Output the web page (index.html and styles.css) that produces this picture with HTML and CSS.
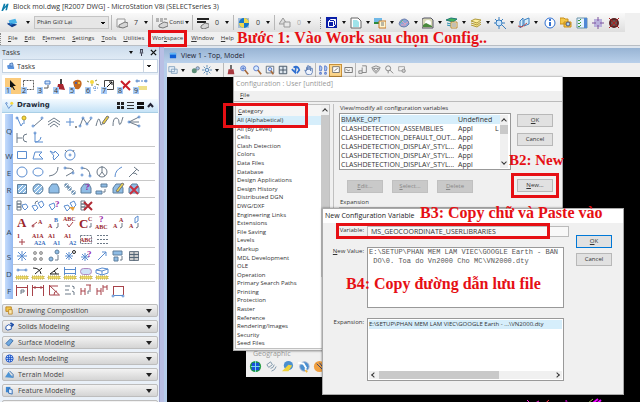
FILE: index.html
```html
<!DOCTYPE html>
<html lang="vi">
  <head>
    <meta charset="UTF-8" />
    <title>Block moi.dwg - MicroStation V8i</title>
    <link rel="stylesheet" href="styles.css">
  </head>
  <body>
    <header class="titlebar">
      <svg class="logo" viewBox="0 0 9 10"><path d="M0 10L3 1h2l-1 4 3-4h2L7 9H5l1-4-3 3-1 2z" fill="#0b7cab"/></svg>
      <h1>Block moi.dwg [R2007 DWG] - MicroStation V8i (SELECTseries 3)</h1>
    </header>

    <div class="toolbar">
      <button class="tool wide" title="Template"><svg viewBox="0 0 14 12"><path d="M1 7l5-2 7 3-6 3z" fill="#123d8a"/><path d="M3 3l8-2 2 5-8 2z" fill="#49b3e8"/><path d="M1 5l3 2 4-1-2 3z" fill="#1a6cc5"/></svg><i class="dd"></i></button>
      <select class="level" title="Level"><option>Phân Giữ Lại</option></select>
      <span class="sep"></span>
      <button class="tool attr" title="Color"><svg viewBox="0 0 12 12"><path d="M1 2h8v8H1z" fill="#f4f4f4" stroke="#999"/><path d="M3 8l6-3 3 1v3l-5 2-4-1z" fill="#d5d5d5" stroke="#777"/></svg><span>7</span><i class="dd"></i></button>
      <span class="sep"></span>
      <button class="tool style" title="Line style"><svg viewBox="0 0 12 12"><path d="M0 2h12M0 4h8" stroke="#777" stroke-dasharray="3 1"/><path d="M3 8l5-3 4 1v3l-5 2-4-1z" fill="#d5d5d5" stroke="#777"/></svg><span>Conti</span><i class="dd"></i></button>
      <span class="sep"></span>
      <button class="tool attr" title="Weight"><svg viewBox="0 0 12 12"><path d="M0 2h12M0 5h9" stroke="#222" stroke-width="2"/><path d="M4 9l4-3 4 1v3l-5 2-3-1z" fill="#d5d5d5" stroke="#777"/></svg><span>0</span><i class="dd"></i></button>
      <span class="sep"></span>
      <button class="tool attr" title="Transparency"><svg viewBox="0 0 12 12"><path d="M0 1h11v10H0z" fill="#a8bfd8"/><circle cx="6" cy="6" r="5" fill="#1677c9"/><path d="M6 1a5 5 0 0 1 5 5H6zM6 6v5a5 5 0 0 1-5-5z" fill="#f0d84e"/></svg><span>0</span><i class="dd"></i></button>
      <span class="sep"></span>
      <button class="tool attr faded" title="Priority"><svg viewBox="0 0 12 12"><path d="M4 1l4 6H0z" fill="#ddd" stroke="#999"/><path d="M5 5h6v5H5z" fill="#e8e8e8" stroke="#999"/></svg><span>0</span><i class="dd"></i></button>
      <span class="grip"></span>
      <button class="tool" title="Models"><svg viewBox="0 0 12 12"><path d="M0 0h11v11H0z" fill="#0a1fa8"/><path d="M2.500 4.500h5v5h-5zM2.500 4.500l2-2h5v5l-2 2M7.500 4.500l2-2" stroke="#fff"/></svg><i class="dd"></i></button>
      <button class="tool" title="References"><svg viewBox="0 0 12 12"><path d="M1 1h7l3 3v7H1z" fill="#fff" stroke="#666"/><path d="M3 3h4l2 2v5H3z" fill="#9fe3ea"/></svg><i class="dd"></i></button>
      <button class="tool" title="Raster"><svg viewBox="0 0 12 12"><path d="M0 1h8v6H0z" fill="#6fb8e6"/><path d="M0 5h8v2H0z" fill="#2e8a3a"/><path d="M5 4h7v7H5z" fill="#fff6d0" stroke="#c57a2c"/><path d="M7 6h3M7 8h3" stroke="#777"/></svg><i class="dd"></i></button>
      <button class="tool" title="Point clouds"><svg viewBox="0 0 12 12"><path d="M1 7q1-5 6-5 4 1 4 5-2 3-5 3-4 0-5-3z" fill="#89a6d8" stroke="#6d7fae"/><path d="M4 4l3 3 3-2M3 8h5" stroke="#e8a0b8"/><path d="M2 6l3-3" stroke="#58b88a"/></svg><i class="dd"></i></button>
      <button class="tool" title="Level manager"><svg viewBox="0 0 12 12"><path d="M0 2l2-1h7l2 2v8H0z" fill="#d9d9b8" stroke="#556"/><circle cx="6" cy="6" r="3" fill="#fff"/><path d="M1 8l3-2 6 3v1H1z" fill="#4a8a3e"/></svg><i class="dd"></i></button>
      <button class="tool" title="Level display"><svg viewBox="0 0 12 12"><path d="M0 3l5-2 6 1-4 3z" fill="#3fb45a" stroke="#277"/><path d="M1 6l4 1 3-2M1 8l4 1" stroke="#2a8fb0"/><path d="M5 5h6v6H5z" fill="#fff7dd" stroke="#b98a3a"/><path d="M6 7h4M6 9h4" stroke="#888"/></svg><i class="dd"></i></button>
      <button class="tool" title="Level filters"><svg viewBox="0 0 12 12"><path d="M1 8l6 2 4-3M1 6l6 2 4-3" fill="#f8e58a" stroke="#b09a3a"/><path d="M1 4l6 2 4-3-6-1z" fill="#fbee9e" stroke="#b09a3a"/></svg><i class="dd"></i></button>
      <button class="tool" title="AccuDraw"><svg viewBox="0 0 12 12"><circle cx="5" cy="6" r="3" fill="#cfe6fa" stroke="#3a7fc0"/><path d="M5 0v3M5 9v3M0 6h2M8 6h3M1 2l2 2M9 2L7 4M8 8l4 4" stroke="#3a7fc0"/></svg><i class="dd"></i></button>
      <button class="tool" title="Keyin"><svg viewBox="0 0 12 12"><path d="M2 4l3-3v7l-3 3zM6 3l5-2v6L6 9z" fill="#d6edfa" stroke="#3a7fc0"/><path d="M0 9l4 1 5-4" stroke="#c04a4a"/></svg><i class="dd"></i></button>
      <button class="tool plain" title="Element information"><svg viewBox="0 0 12 12"><circle cx="6" cy="6" r="5" fill="#fff" stroke="#2f6fd0"/><path d="M6 5v4M6 2v2" stroke="#2f6fd0" stroke-width="2"/></svg></button>
      <button class="tool plain" title="Project explorer"><svg viewBox="0 0 12 12"><path d="M0 1h4l1 1h3v5H0zM4 5h7v5H4z" fill="#f5c84a" stroke="#c98f1a"/><circle cx="8" cy="7" r="2" fill="#a8d6f5" stroke="#557"/></svg></button>
      <button class="tool plain" title="Tasks"><svg viewBox="0 0 12 12"><path d="M1 1h10v10H1z" fill="#e4f3ff" stroke="#6a93a8"/><path d="M8 1h3v10H8z" fill="#4f87d5"/><path d="M2 3l1 1 2-2M2 6l1 1 2-2M2 9l1 1 2-2" stroke="#3c9c3c"/></svg></button>
      <button class="tool plain" title="Saved views"><svg viewBox="0 0 12 12"><path d="M2 2h8v8H2z" fill="#b9b0dc"/><path d="M6 0v4M6 8v4M0 6h4M8 6h4" stroke="#7a4f9a"/></svg></button>
      <button class="tool plain" title="Help off"><svg viewBox="0 0 12 12"><circle cx="6" cy="6" r="4" fill="#6b5552" stroke="#5a2222" stroke-width="2"/><path d="M1 1l10 10M11 1L1 11" stroke="#b02020"/></svg></button>
    </div>

    <nav class="menubar">
      <span class="grip"></span>
      <a href="#"><u>F</u>ile</a>
      <a href="#"><u>E</u>dit</a>
      <a href="#">E<u>l</u>ement</a>
      <a href="#"><u>S</u>ettings</a>
      <a href="#"><u>T</u>ools</a>
      <a href="#"><u>U</u>tilities</a>
      <a href="#" class="marked">Wor<u>k</u>space</a>
      <a href="#"><u>W</u>indow</a>
      <a href="#"><u>H</u>elp</a>
      <strong class="note step1">Bước 1: Vào Work sau chọn Config..</strong>
    </nav>

    <main class="workspace">
      <aside class="tasks">
        <div class="tasks-title">
          <h2>Tasks</h2>
          <i class="dd"></i>
          <svg viewBox="0 0 8 8"><path d="M3 0v4M5 0v4M2 4.500h4M4 5v3M3 .5h2" stroke="#223"/></svg>
          <svg viewBox="0 0 8 8"><path d="M1 1l6 6M7 1L1 7" stroke="#111" stroke-width="1.500"/></svg>
        </div>
        <div class="task-pick">
          <svg viewBox="0 0 9 9"><path d="M0 4l3-1 5 2v3H1z" fill="#5b93dd"/><path d="M3 2l3-1 1 3-3 1z" fill="#9cc4f2" stroke="#4a78b8"/></svg>
          <select title="Tasks"><option>Tasks</option></select>
        </div>
        <div class="main-tools">
          <button class="on" title="Element selection"><svg viewBox="0 0 16 16"><path d="M5 2l6 6-3 0 2 4-1 0-2-3-2 2z" fill="#111"/></svg><b>1</b></button>
          <button title="Fence"><svg viewBox="0 0 16 16"><path d="M2.500 2.500h10v9h-10z" stroke="#555" stroke-dasharray="2 1"/></svg><b>2</b></button>
          <button title="Manipulate"><svg viewBox="0 0 16 16"><path d="M8 3h5v3H8z" stroke="#4a7fc8" fill="#cfe2fa"/><path d="M11 7v3H7" stroke="#555"/></svg><b>3</b></button>
          <button title="View"><svg viewBox="0 0 16 16"><path d="M7 1h2v5H7z" fill="#444"/><path d="M5 6h5l2 6-8-1z" fill="#a8262f"/></svg><b>4</b></button>
          <button title="Change attributes"><svg viewBox="0 0 16 16"><path d="M4 4q4-4 8-1 2 4-2 8-5 1-5-3z" fill="#c56a20"/><circle cx="7" cy="5" r="1" fill="#2a5cc8"/><circle cx="10" cy="5" r="1" fill="#f5dc4a"/></svg><b>5</b></button>
          <button title="Groups"><svg viewBox="0 0 16 16"><circle cx="7" cy="4" r="2" fill="#f7d93c"/><path d="M7 6v2M2 3l2 1M12 2l-2 1M11 6l3 1" stroke="#8a8a40"/><path d="M8 10h5M10 8v5" stroke="#4a7fc8" stroke-dasharray="1 1"/></svg><b>6</b></button>
          <button title="Scale"><svg viewBox="0 0 16 16"><path d="M3.500 2.500h9v9h-9z" stroke="#444"/><path d="M5 10l6-6M8 4h3v3" stroke="#111"/></svg><b>7</b></button>
          <button title="Delete"><svg viewBox="0 0 16 16"><path d="M4 3l9 9M13 3L4 12" stroke="#c81e2a" stroke-width="2"/></svg><b>8</b></button>
          <button title="Measure"><svg viewBox="0 0 16 16"><path d="M5 3h7" stroke="#4a7fc8" stroke-dasharray="2 1"/><circle cx="4" cy="3" r="1" stroke="#4a7fc8"/><circle cx="13" cy="3" r="1" stroke="#4a7fc8"/><path d="M5 8h9v4H5z" fill="#eee08a"/></svg><b>9</b></button>
        </div>

        <div class="drawing-head">
          <svg viewBox="0 0 12 12"><circle cx="9" cy="3" r="2" fill="#f7d93c"/><path d="M9 5v2M1 3l4 7M5 10l3-4" stroke="#4a7fc8"/><circle cx="2" cy="3" r="1" fill="#fff" stroke="#4a7fc8"/></svg>
          <h3>Drawing</h3>
          <svg viewBox="0 0 9 9"><path d="M1 1h3v3H1zM5 1h3v3H5zM1 5h3v3H1zM5 5h3v3H5z" fill="#222"/></svg>
          <svg viewBox="0 0 9 9"><path d="M1 1.500h7M1 4.500h7M1 7.500h7" stroke="#333"/></svg>
          <svg viewBox="0 0 9 9"><path d="M1 1h7v3H1zM1 5h7v3H1z" fill="#111"/></svg>
          <svg viewBox="0 0 9 9"><path d="M2 6l2.500-3L7 6" stroke="#223" stroke-width="2"/></svg>
        </div>

        <div class="palette">
          <div class="group tall"><b>Q</b><div class="icons">
            <svg viewBox="0 0 16 16"><circle cx="10" cy="4" r="2" fill="#f7d93c" stroke="#b59c28"/><path d="M10 6v4M3 3l4 9M7 12l2-3" class="bl"/><circle cx="3" cy="4" r="1" class="bl"/></svg>
            <svg viewBox="0 0 16 16"><path d="M4 12l8-7" class="dk"/><circle cx="3" cy="12" r="1" class="bl"/><circle cx="12" cy="4" r="1" class="bl"/></svg>
            <svg viewBox="0 0 16 16"><path d="M2 8l6-4 6 4M2 11l6-4 6 4M4 13l4-3 4 3" class="dk"/></svg>
            <svg viewBox="0 0 16 16"><path d="M8 4v8M4 8h8" class="bl"/><path d="M14 12v2" class="bk"/></svg>
            <svg viewBox="0 0 16 16"><path d="M2 12l3-8 4 6 4-5" class="dk"/><circle cx="2" cy="12" r="1" class="bl"/><circle cx="5" cy="4" r="1" class="bl"/><circle cx="9" cy="10" r="1" class="bl"/><circle cx="13" cy="4" r="1" class="bl"/></svg>
            <svg viewBox="0 0 16 16"><path d="M2 12q2-8 3-7t2 6q2 0 6-8" class="dk"/><path d="M8 9l5-7 2 1-5 7z" fill="#f0cf3c" stroke="#777"/></svg>
            <svg viewBox="0 0 16 16"><path d="M3 12q0-8 3-8t3 5q1 5 4-6" class="dk"/></svg>
            <svg viewBox="0 0 16 16"><path d="M3 8l10-5M3 8h10M3 8l10 4" class="dk"/><circle cx="3" cy="8" r="1" class="bl"/><circle cx="13" cy="3" r="1" class="bl"/><circle cx="13" cy="12" r="1" class="bl"/></svg>
            <svg viewBox="0 0 16 16"><path d="M3 3v10M3 8h5M13 4q-4 0-4 4t4 4" class="dk"/></svg>
            <svg viewBox="0 0 16 16"><path d="M5 3v9h8M5 12q5 0 6-5" class="bl"/><circle cx="5" cy="3" r="1" class="bl"/></svg>
          </div></div>
          <div class="group"><b>W</b><div class="icons">
            <svg viewBox="0 0 16 16"><path d="M3.500 4.500h9v7h-9z" class="bl"/></svg>
            <svg viewBox="0 0 16 16"><path d="M3 12l2-7h7L9 8l4 4z" class="bl"/></svg>
            <svg viewBox="0 0 16 16"><path d="M4 4l4 2 1-2 4 4-5 5-1-3 1-1z" class="bl"/></svg>
            <svg viewBox="0 0 16 16"><circle cx="8" cy="8" r="5" class="bl"/><circle cx="8" cy="8" r="1" class="bl"/><path d="M3 3l2 2M12 3l-1 2" class="dk"/></svg>
          </div></div>
          <div class="group"><b>E</b><div class="icons">
            <svg viewBox="0 0 16 16"><circle cx="8" cy="8" r="5" class="bl"/></svg>
            <svg viewBox="0 0 16 16"><ellipse cx="8" cy="8" rx="5" ry="4" class="bl"/></svg>
            <svg viewBox="0 0 16 16"><path d="M3 12q9-1 9-9" class="dk"/></svg>
            <svg viewBox="0 0 16 16"><path d="M3 4q10 0 8 4L4 12" class="dk"/><circle cx="3" cy="4" r="1" class="bl"/><circle cx="11" cy="9" r="1" class="bl"/></svg>
            <svg viewBox="0 0 16 16"><path d="M4 4q8 0 8 8" class="dk"/><circle cx="4" cy="11" r="1" class="bl"/><circle cx="12" cy="12" r="1" class="bl"/><circle cx="4" cy="4" r="1" class="bl"/></svg>
            <svg viewBox="0 0 16 16"><circle cx="8" cy="8" r="5" class="dk"/><path d="M8 2v6l-3 4M8 8l3 4" class="dk"/></svg>
            <svg viewBox="0 0 16 16"><path d="M5 13q0-7 7-10" class="bl"/></svg>
            <svg viewBox="0 0 16 16"><path d="M3 13l8-8M8 3l5 4M7 9q4 0 4 2" class="dk"/></svg>
          </div></div>
          <div class="group"><b>R</b><div class="icons">
            <svg viewBox="0 0 16 16"><path d="M3.500 3.500h9v9h-9z" class="hatch"/><path d="M4 9l5-5M5 12l7-7M9 12l3-3" stroke="#fff"/></svg>
            <svg viewBox="0 0 16 16"><circle cx="8" cy="8" r="5" class="hatch"/><path d="M4 9l5-5M5 12l7-7M9 12l3-3" stroke="#fff"/></svg>
            <svg viewBox="0 0 16 16"><path d="M3 7l3-4h5l2 4v5H3z" class="hatch"/></svg>
            <svg viewBox="0 0 16 16"><path d="M3 3h3v3H3zM6 6h3v3H6zM10 10h3v3h-3z" class="hatch"/><path d="M3 6l3-3M6 9l3-3M10 13l3-3" stroke="#fff"/></svg>
            <svg viewBox="0 0 16 16"><path d="M3 7l3-4h5l2 4v5H3z" class="hatch"/><text x="7" y="9" class="q">?</text></svg>
            <svg viewBox="0 0 16 16"><path d="M7 3h6v3H7zM2 10h6v3H2z" class="hatch"/><path d="M11 8v3H9" class="dk"/></svg>
            <svg viewBox="0 0 16 16"><path d="M3 7l3-4h5l2 4v5H3z" class="hatch"/><path d="M6 10l6-8 2 1-6 8z" fill="#f0d84e" stroke="#777"/></svg>
            <svg viewBox="0 0 16 16"><path d="M3 7l3-4h5l2 4v5H3z" class="hatch"/><path d="M4 5l8 8M12 5l-8 8" stroke="#c83040" stroke-width="2"/></svg>
          </div></div>
          <div class="group"><b>T</b><div class="icons">
            <svg viewBox="0 0 16 16"><path d="M3 3h4v3H3zM3 6h4v3H3zM3 9h4v3H3z" class="dk"/><path d="M8 7l4-1 2 3-3 3-2-2z" class="bl"/></svg>
            <svg viewBox="0 0 16 16"><path d="M2 8l4-1 2 3-3 3zM8 5l4-2 2 4-3 3z" class="bl"/><path d="M5 6q0-3 3-3" class="dk"/></svg>
            <svg viewBox="0 0 16 16"><path d="M3 7l5-2 1 4-3 3z" class="bl"/><text x="9" y="9" class="q">?</text></svg>
            <svg viewBox="0 0 16 16"><path d="M2 8l4-1 2 3-3 3zM8 5l4-2 2 4-3 3z" class="bl"/><path d="M7 9h6l-2 4z" fill="#e8a23c"/></svg>
            <svg viewBox="0 0 16 16"><path d="M3 3h4v3H3zM3 6h4v3H3zM3 9h4v3H3z" class="dk"/><path d="M6 4l8 8M14 4l-8 8" stroke="#b02a34" stroke-width="2"/></svg>
          </div></div>
          <div class="group tall"><b>A</b><div class="icons">
            <svg viewBox="0 0 16 16"><text x="3" y="12" class="big">A</text></svg>
            <svg viewBox="0 0 16 16"><path d="M2 11l5-4" class="rd"/><circle cx="3" cy="11" r="1" class="rd"/><text x="8" y="9">A</text></svg>
            <svg viewBox="0 0 16 16"><text x="2" y="13">A</text><text x="8" y="7" class="blue">B</text><path d="M12 8v4l-2 1" class="dk"/></svg>
            <svg viewBox="0 0 16 16"><text x="1" y="6">ABC</text><path d="M5 9l2 3 4-5" class="rd"/></svg>
            <svg viewBox="0 0 16 16"><text x="1" y="13" class="big">C</text><text x="10" y="6">C</text><path d="M13 8v4h-2" class="dk"/></svg>
            <svg viewBox="0 0 16 16"><text x="1" y="14">ABC</text><text x="5" y="7" class="q">?</text></svg>
            <svg viewBox="0 0 16 16"><text x="3" y="13">A</text><text x="9" y="7">A</text><path d="M12 8v4l-2 1" class="dk"/></svg>
            <svg viewBox="0 0 16 16"><text x="3" y="13">A</text><path d="M9 3l3-2v5l-3 2z" class="bl"/><path d="M12 8v4l-2 1" class="dk"/></svg>
            <svg viewBox="0 0 16 16"><text x="3" y="7">1</text><path d="M8 8v6M5 11h6" class="rd"/></svg>
            <svg viewBox="0 0 16 16"><text x="2" y="7">A1A</text><text x="4" y="14" class="blue">A2A</text></svg>
            <svg viewBox="0 0 16 16"><text x="2" y="7">A1</text><text x="7" y="14" class="blue">A1</text></svg>
            <svg viewBox="0 0 16 16"><text x="2" y="7">A1</text><text x="7" y="14" class="blue">A2</text></svg>
            <svg viewBox="0 0 16 16"><path d="M2.500 4.500h11v8h-11z" class="dk dash"/><text x="2" y="11">ABC</text></svg>
            <svg viewBox="0 0 16 16"><path d="M3 4.500h11M3 8.500h11M3 12.500h11" class="dk dash"/></svg>
          </div></div>
          <div class="group"><b>S</b><div class="icons">
            <svg viewBox="0 0 16 16"><path d="M8 3v10M3 8h10M4 4l8 8M12 4l-8 8" class="bl"/></svg>
            <svg viewBox="0 0 16 16"><circle cx="5" cy="5" r="1.500" class="dots"/><circle cx="11" cy="5" r="1.500" class="dots"/><circle cx="5" cy="11" r="1.500" class="dots"/><circle cx="11" cy="11" r="1.500" class="dots"/></svg>
            <svg viewBox="0 0 16 16"><circle cx="11" cy="4" r="2" class="hatch"/><circle cx="5" cy="11" r="2" class="hatch"/><path d="M12 7v5H9" class="dk"/></svg>
            <svg viewBox="0 0 16 16"><path d="M7 4v8M3 8h8M4 5l6 6M10 5l-6 6" class="bl"/><circle cx="12" cy="4" r="1.500" class="bk"/></svg>
            <svg viewBox="0 0 16 16"><path d="M7 5v8M3 9h8M4 6l6 6M10 6l-6 6" class="bl"/><text x="9" y="9" class="q">?</text></svg>
            <svg viewBox="0 0 16 16"><path d="M4 12l8-8M8 4h4v4" class="bl"/></svg>
            <svg viewBox="0 0 16 16"><path d="M3 3h9v4H3zM4 9h4v4H4z" class="hatch"/><path d="M12 8v4h-2" class="dk"/></svg>
            <svg viewBox="0 0 16 16"><path d="M3.500 3.500h9v9h-9z" fill="#ccc" class="dk"/><path d="M3 6.500h10M3 9.500h10M8 4v9" stroke="#567"/></svg>
          </div></div>
          <div class="group"><b>D</b><div class="icons">
            <svg viewBox="0 0 16 16"><path d="M4 5h8" class="bl"/><circle cx="4" cy="5" r="1" class="bl"/><circle cx="12" cy="5" r="1" class="bl"/><path d="M2 11h12v3H2z" class="ruler"/></svg>
            <svg viewBox="0 0 16 16"><path d="M3 3q7 0 8 6M5 9l7-6" class="bk"/><path d="M2 11h12v3H2z" class="ruler"/></svg>
            <svg viewBox="0 0 16 16"><path d="M12 3L4 9h9M8 6q2 1 2 3" class="bk"/><path d="M2 11h12v3H2z" class="ruler"/></svg>
            <svg viewBox="0 0 16 16"><path d="M2.500 2v8M13.500 2v8M3 4.500h10M3 8.500h10" class="bl"/><path d="M2 11h12v3H2z" class="ruler"/></svg>
            <svg viewBox="0 0 16 16"><rect x="2.500" y="3.500" width="11" height="6" rx="3" fill="#cfe2f7" stroke="#b08ac0"/><path d="M2 11h12v3H2z" class="ruler"/></svg>
            <svg viewBox="0 0 16 16"><path d="M2 5l6-2 6 1v4l-6 2-6-2zM2 5l6 1 6-2M8 6v4" class="bl"/><path d="M2 11h12v3H2z" class="ruler"/></svg>
          </div></div>
          <div class="group"><b>F</b><div class="icons">
            <svg viewBox="0 0 16 16"><path d="M2.500 3v11M13.500 3v11M3 5.500h10" class="rd"/><path d="M7 12V8h3v2H7" class="dk"/></svg>
            <svg viewBox="0 0 16 16"><path d="M2.500 3v11M13.500 3v11M3 5.500h10M5 4v3M11 4v3" class="rd"/></svg>
            <svg viewBox="0 0 16 16"><path d="M3.500 3v10h10L4 4M3 4h9M8 13q0-4 3-4" class="rd"/></svg>
            <svg viewBox="0 0 16 16"><path d="M3 4h5M3 8h4M3 12h6M10 4q3 0 2 3M10 9q3 0 2 4" class="dk"/></svg>
            <svg viewBox="0 0 16 16"><path d="M3 6v7M7 6v7M3 9h4M8 3h5M12 3v5" class="rd"/><path d="M10 12V9h3" class="dk"/></svg>
            <svg viewBox="0 0 16 16"><path d="M3 6v7M7 6v7M3 9h4M9 3v7M13 3v5M9 5h4" class="rd"/></svg>
            <svg viewBox="0 0 16 16"><path d="M3.500 4v9M13.500 4v9M4 4.500h9" class="rd"/><path d="M4 13.500h9" class="bl"/><circle cx="3" cy="14" r="1" class="bl"/><circle cx="13" cy="14" r="1" class="bl"/></svg>
          </div></div>
        </div>

        <div class="bars">
          <button><svg viewBox="0 0 10 10"><path d="M1 1h6v5H1z" fill="#f3c64a" stroke="#b98220"/><path d="M4 4h4v5H4z" fill="#f9e8b0" stroke="#c08a30"/></svg><span>Drawing Composition</span><i></i></button>
          <button><svg viewBox="0 0 10 10"><path d="M1 5l3-2 3 1v4L3 9 1 8z" fill="#fff" stroke="#1f4fa8"/><path d="M6 1l3 2-2 2" stroke="#1f4fa8" stroke-width="2"/></svg><span>Solids Modeling</span><i></i></button>
          <button><svg viewBox="0 0 10 10"><path d="M1 6l5-5 3 2-5 6z" fill="#6fa9e0" stroke="#3a6ca8"/></svg><span>Surface Modeling</span><i></i></button>
          <button><svg viewBox="0 0 10 10"><circle cx="5" cy="5" r="4" fill="#d5e8ff" stroke="#1d55c8"/><path d="M1 4h8M1 6h8M4 1v8M6 1v8" stroke="#1d55c8"/></svg><span>Mesh Modeling</span><i></i></button>
          <button><svg viewBox="0 0 10 10"><path d="M0 8l4-6 2 3 4 4z" fill="#4e94d4"/><path d="M5 1l4 4v3" stroke="#2862a5"/></svg><span>Terrain Model</span><i></i></button>
          <button><svg viewBox="0 0 10 10"><path d="M1 1h5v6H1z" fill="#3d86d0"/><path d="M4 3l4 1v5l-4-1z" fill="#e6f2ff" stroke="#2b69b2"/></svg><span>Feature Modeling</span><i></i></button>
          <button><span></span></button>
        </div>
      </aside>

      <section class="view">
        <div class="view-title">
          <svg viewBox="0 0 9 9"><path d="M1 1h7v6H1z" fill="#0f5fd8"/><path d="M1 1h7v2H1z" fill="#62b6f5"/></svg>
          <h2>View 1 - Top, Model</h2>
        </div>
        <div class="view-tools">
          <button class="split" title="View attributes"><svg viewBox="0 0 12 12"><path d="M1 2h7v6H1zM4 5h7v5H4z" fill="#e9f2fb" stroke="#7a9ab8"/></svg><i class="dd"></i></button>
          <button title="Display style"><svg viewBox="0 0 12 12"><circle cx="4" cy="7" r="3" fill="#5d8f78"/><circle cx="8" cy="4" r="2" fill="#a9c5e8" stroke="#678"/></svg></button>
          <button class="split" title="Brightness"><svg viewBox="0 0 12 12"><circle cx="6" cy="6" r="2" fill="#d6eaff" stroke="#4a7fae"/><path d="M6 0v3M6 9v3M0 6h3M9 6h3M2 2l2 2M10 2L8 4M2 10l2-2M10 10L8 8" stroke="#4a7fae"/></svg><i class="dd"></i></button>
          <span class="sep"></span>
          <button title="Update view"><svg viewBox="0 0 12 12"><path d="M5 0h2v5H5z" fill="#555"/><path d="M3 5h6l1 6H2z" fill="#a83a40"/></svg></button>
          <button title="Zoom in"><svg viewBox="0 0 12 12"><circle cx="5" cy="4" r="3" fill="#d6eaff" stroke="#4a6fc8"/><path d="M7 6l4 5" stroke="#a86a3a" stroke-width="2"/><path d="M3 4h4M5 2v4" stroke="#4a6fc8"/></svg></button>
          <button title="Zoom out"><svg viewBox="0 0 12 12"><circle cx="5" cy="4" r="3" fill="#d6eaff" stroke="#4a6fc8"/><path d="M7 6l4 5" stroke="#a86a3a" stroke-width="2"/></svg></button>
          <button title="Window area"><svg viewBox="0 0 12 12"><path d="M1.500 1.500h9v8h-9z" stroke="#567"/><circle cx="6" cy="5" r="2" fill="#d6eaff" stroke="#4a6fc8"/><path d="M7 7l3 4" stroke="#a86a3a" stroke-width="2"/></svg></button>
          <button title="Fit view"><svg viewBox="0 0 12 12"><path d="M1.500 1.500h9v9h-9z" fill="#dde6ee" stroke="#345"/><path d="M6 2v8M2 6h8" stroke="#345"/></svg></button>
          <button title="Rotate view"><svg viewBox="0 0 12 12"><path d="M3 3q5-3 7 3l-3 4M1 5l4 4 1-7" stroke="#2f6fd0" stroke-width="2"/></svg></button>
          <button title="Pan view"><svg viewBox="0 0 12 12"><path d="M3 11L1 6l2 1V3h1v3-5h2v5-4h2v5-3h2v5l-2 3z" fill="#eef4ff" stroke="#5577b0"/></svg></button>
          <span class="sep"></span>
          <button title="View previous"><svg viewBox="0 0 12 12"><path d="M2 1q4 0 2 6H2zM8 1q4 0 2 6H8zM2 9h2v2H2zM8 9h2v2H8z" fill="#bcd2f2" stroke="#4a6fc8"/></svg></button>
          <button class="on" title="View next"><svg viewBox="0 0 12 12"><path d="M2 2h8v7H2z" fill="#fdfdfd" stroke="#666"/><path d="M4 7l4-3" stroke="#666"/></svg></button>
          <button title="Copy view"><svg viewBox="0 0 12 12"><path d="M1 3h9v6H1z" fill="#f4f4f4" stroke="#666"/><path d="M3 5l2 2 2-1" stroke="#666"/></svg></button>
          <span class="sep"></span>
          <button title="Clip volume"><svg viewBox="0 0 12 12"><path d="M5 1h5v8H5M5 3v7H1V7h4" stroke="#777"/></svg></button>
          <button title="Clip mask"><svg viewBox="0 0 12 12"><path d="M1 3l5-2 5 2-2 4-3 3-3-3zM3 4h6L6 8z" stroke="#777"/></svg></button>
          <button title="Walk"><svg viewBox="0 0 12 12"><circle cx="5" cy="4" r="3" stroke="#777"/><path d="M5 7v3M7 6l4 4" stroke="#777"/></svg></button>
          <button title="Render"><svg viewBox="0 0 12 12"><path d="M2 2h7v5H2z" stroke="#999"/><circle cx="8" cy="7" r="2" fill="#ccc" stroke="#888"/></svg></button>
        </div>

        <div class="canvas">
          <svg class="drawing" viewBox="0 0 120 20"><path d="M40 8l11 11L62 8M46 12l6-3M50 16l6-6" stroke="#f2d"/><path d="M79 18V8l4 7 6 3M126 1h-8" stroke="#a0a"/><path d="M97 18l14-11M102 18l12-10" stroke="#e0f" stroke-width="2"/><path d="M95 16l11-9" stroke="#9b5"/><path d="M54 15l8-7" stroke="#e33"/></svg>

          <div class="geo">
            <p>Geographic</p>
            <div>
              <svg viewBox="0 0 14 14"><circle cx="7" cy="7" r="6" fill="#1c9a38"/><path d="M3 3h8v8H3z" fill="#1a50d8"/><path d="M2 7h10M7 1v12" stroke="#7fe0f0"/></svg>
              <svg viewBox="0 0 14 14"><path d="M2 5l4-3 2 3-4 3zM6 9q3 0 4-4M7 12q4-1 5-5" stroke="#7a93a8"/></svg>
              <svg viewBox="0 0 14 14"><circle cx="8" cy="6" r="5" fill="#4b8fd0"/><path d="M1 12l7-7 4 1-4 6z" fill="#f0d43c"/></svg>
              <svg viewBox="0 0 14 14"><circle cx="8" cy="7" r="5" fill="#4b8fd0" stroke="#9ac"/><path d="M1 3l6 1 3 5M9 9l1 4" stroke="#fff" stroke-width="2"/><path d="M9 11l2 2" stroke="#f0b43c" stroke-width="2"/></svg>
              <svg viewBox="0 0 14 14"><circle cx="7" cy="7" r="6" fill="#f0a040"/><path d="M4 4l6 6M7 3l3 4" stroke="#347"/></svg>
            </div>
          </div>

          <div class="dialog config">
            <h2>Configuration : User [untitled]</h2>
            <nav><a href="#"><u>F</u>ile</a></nav>
            <div class="config-body">
              <div class="category">
                <h3><u>C</u>ategory</h3>
                <ul>
                  <li class="picked">All (Alphabetical)</li>
                  <li>All (By Level)</li>
                  <li>Cells</li>
                  <li>Clash Detection</li>
                  <li>Colors</li>
                  <li>Data Files</li>
                  <li>Database</li>
                  <li>Design Applications</li>
                  <li>Design History</li>
                  <li>Distributed DGN</li>
                  <li>DWG/DXF</li>
                  <li>Engineering Links</li>
                  <li>Extensions</li>
                  <li>File Saving</li>
                  <li>Levels</li>
                  <li>Markup</li>
                  <li>MDL Development</li>
                  <li>OLE</li>
                  <li>Operation</li>
                  <li>Primary Search Paths</li>
                  <li>Printing</li>
                  <li>Protection</li>
                  <li>Raster</li>
                  <li>Reference</li>
                  <li>Rendering/Images</li>
                  <li>Security</li>
                  <li>Seed Files</li>
                </ul>
                <div class="scroll"><i class="up"></i><span></span><i class="down"></i></div>
              </div>
              <div class="variables">
                <h3>View/modify all configuration variables</h3>
                <div class="list">
                  <table>
                    <tr class="picked"><td>BMAKE_OPT</td><td>Undefined</td><td></td></tr>
                    <tr><td>CLASHDETECTION_ASSEMBLIES</td><td>Appl</td><td>L</td></tr>
                    <tr><td>CLASHDETECTION_DEFAULT_OUT...</td><td>Appl</td><td></td></tr>
                    <tr><td>CLASHDETECTION_DISPLAY_STYL...</td><td>Appl</td><td></td></tr>
                    <tr><td>CLASHDETECTION_DISPLAY_STYL...</td><td>Appl</td><td></td></tr>
                    <tr><td>CLASHDETECTION_DISPLAY_STYL...</td><td>Appl</td><td></td></tr>
                  </table>
                  <div class="scroll"><i class="up"></i><span></span><i class="down"></i></div>
                </div>
                <div class="actions">
                  <button class="btn" disabled><u>E</u>dit...</button>
                  <button class="btn" disabled><u>S</u>elect...</button>
                  <button class="btn" disabled><u>D</u>elete</button>
                </div>
                <h3>Expansion</h3>
                <div class="expansion-box"></div>
              </div>
              <div class="side">
                <button class="btn"><u>O</u>K</button>
                <button class="btn">Cancel</button>
                <span class="marked"><button class="btn"><u>N</u>ew...</button></span>
              </div>
            </div>
            <strong class="note step2">B2: New</strong>
          </div>

          <form class="dialog new-variable">
            <h2>New Configuration Variable</h2>
            <div class="form-body">
              <div class="fields">
                <label for="variable">Variable:</label>
                <input id="variable" type="text" value="MS_GEOCOORDINATE_USERLIBRARIES">
                <label for="value"><u>N</u>ew Value:</label>
                <textarea id="value" spellcheck="false">E:\SETUP\PHAN MEM LAM VIEC\GOOGLE Earth - BAN
 DO\0. Toa do Vn2000 Cho MC\VN2000.dty</textarea>
                <label for="expanded">Expansion:</label>
                <div class="expanded">
                  <output id="expanded">E:\SETUP\PHAN MEM LAM VIEC\GOOGLE Earth - ...\VN2000.dty</output>
                  <div class="scroll flat"><i class="left"></i><span></span><i class="right"></i></div>
                </div>
              </div>
              <div class="confirm">
                <button class="btn ok" type="button"><u>O</u>K</button>
                <button class="btn" type="button">Cancel</button>
              </div>
            </div>
            <strong class="note step3">B3: Copy chữ và Paste vào</strong>
            <strong class="note step4">B4: Copy đường dẫn lưu file</strong>
          </form>
        </div>
      </section>
    </main>
  </body>
</html>
```
FILE: styles.css
```css
*, *::before, *::after {
  margin: 0;
  padding: 0;
  box-sizing: border-box;
}

body {
  height: 100vh;
  display: flex;
  flex-direction: column;
  overflow: hidden;
  background-color: #f0f0f0;
  color: #333;
  font-family: "Open Sans", "Segoe UI", sans-serif;
  font-size: 7px;
  line-height: 9px;
}

h1, h2, h3 {
  font-size: 7px;
  font-weight: 400;
  white-space: nowrap;
}

button, select, input, textarea {
  font: inherit;
  color: inherit;
  border: none;
  background: none;
  border-radius: 0;
  outline: none;
}

select {
  appearance: none;
}

a {
  color: inherit;
  text-decoration: none;
}

svg {
  display: block;
  flex: none;
  fill: none;
}

.dd {
  flex: none;
  border: 2px solid transparent;
  border-top: 3px solid #111;
  border-bottom: 0;
}

.sep {
  flex: none;
  width: 1px;
  height: 15px;
  background-color: #b8b8b8;
}

.grip {
  flex: none;
  width: 1px;
  height: 12px;
  border-left: 1px dotted #888;
}

/* red tutorial notes and frames */
.note {
  position: absolute;
  color: #e60f14;
  font-family: "Liberation Serif", serif;
  font-size: 16px;
  line-height: 16px;
  white-space: nowrap;
}

.step1 {
  left: 237px;
  top: -2px;
}

.step2 {
  left: 275px;
  top: 75px;
  font-size: 15px;
}

.step3 {
  left: 97px;
  top: -4px;
}

.step4 {
  left: 23px;
  top: 67px;
}

/* top of the window */
.titlebar {
  display: flex;
  align-items: center;
  gap: 4px;
  height: 13px;
  padding-left: 1px;
  background-color: white;
}

.logo {
  width: 8px;
  height: 8px;
}

.toolbar {
  display: flex;
  align-items: center;
  align-self: flex-start;
  height: 19px;
  padding: 0 3px 0 2px;
  background: linear-gradient(#fafafa, #dedede);
}

.toolbar .sep {
  margin-right: 1px;
}

.tool {
  flex: none;
  display: flex;
  align-items: center;
  justify-content: space-between;
  width: 24px;
  height: 15px;
  padding: 0 4px 0 0;
}

.tool svg {
  width: 12px;
  height: 12px;
}

.toolbar .wide {
  width: 32px;
  padding-left: 4px;
}

.toolbar .attr {
  width: 39px;
  padding: 0 4px 0 3px;
}

.toolbar .style {
  width: 38px;
  padding: 0 3px 0 2px;
  font-size: 6px;
}

.toolbar .plain {
  width: 16px;
  padding: 0 2px;
}

.toolbar .grip {
  margin: 0 5px;
}

.faded {
  color: #aaa;
}

.level {
  width: 75px;
  height: 13px;
  padding-left: 2px;
  margin-right: 2px;
  border: 1px solid #c4c4c4;
  font-size: 6px;
  background: linear-gradient(#111, #111) 66px 5px / 4px 1px no-repeat, linear-gradient(#111, #111) 67px 6px / 2px 1px no-repeat, #e6e6e6;
}

.menubar {
  position: relative;
  flex: none;
  display: flex;
  align-items: center;
  height: 14px;
  border-bottom: 1px solid #b9bec4;
  font-size: 6px;
}

.menubar a {
  margin-left: 7px;
}

.menubar .marked {
  height: 11px;
  padding: 1px 1px 0;
  outline: 3px solid #e60f14;
  z-index: 2;
}

.workspace {
  flex: 1;
  min-height: 0;
  display: flex;
  background-color: #b9bfe4;
}

/* tasks panel */
.tasks {
  flex: none;
  width: 160px;
  padding-right: 1px;
  padding-left: 2px;
  background-color: #e9f0f8;
  border-right: 1px solid #9b9fcb;
}

.tasks-title {
  display: flex;
  align-items: center;
  gap: 5px;
  height: 13px;
  margin: 0 -1px 0 -2px;
  padding: 0 2px;
  background: linear-gradient(#ccdcec, #dfeaf5);
}

.tasks-title h2 {
  flex: 1;
}

.tasks-title svg {
  width: 7px;
  height: 7px;
}

.task-pick {
  display: flex;
  align-items: center;
  height: 14px;
  padding-left: 4px;
  border: 1px solid #c3d2e2;
  background-color: white;
}

.task-pick svg {
  width: 8px;
  height: 8px;
}

.task-pick select {
  flex: 1;
  height: 12px;
  padding-left: 2px;
  background: linear-gradient(#ccd6e2, #ccd6e2) 128px 0 / 1px 12px no-repeat, linear-gradient(#222, #222) 132px 5px / 4px 1px no-repeat, linear-gradient(#222, #222) 133px 6px / 2px 1px no-repeat;
}

.main-tools {
  display: flex;
  height: 24px;
  padding: 3px 0 0 3px;
  margin-top: 2px;
  background-color: white;
}

.main-tools button {
  position: relative;
  width: 16px;
  height: 16px;
}

.main-tools .on {
  background-color: #fbcb7c;
}

.main-tools svg {
  width: 16px;
  height: 16px;
}

.main-tools b {
  position: absolute;
  left: 0;
  bottom: 0;
  width: 6px;
  height: 7px;
  font-weight: 400;
  line-height: 7px;
  background-color: #a9cdf8;
}

.drawing-head {
  display: flex;
  align-items: center;
  gap: 1px;
  height: 14px;
  padding: 0 3px;
  background: linear-gradient(#f4faff, #c5e2f6);
  border-bottom: 1px solid #a9cfe6;
}

.drawing-head h3 {
  flex: 1;
  padding-left: 2px;
  font-family: "DejaVu Sans", sans-serif;
  font-weight: 700;
  color: #1c2b3a;
}

.drawing-head svg {
  width: 9px;
  height: 9px;
}

.palette {
  padding: 1px 0 5px 3px;
  background-color: white;
}

.group {
  display: flex;
  height: 17px;
}

.group b {
  flex: none;
  width: 8px;
  display: flex;
  align-items: center;
  justify-content: center;
  font-size: 8px;
  font-weight: 400;
  color: #345;
  background: linear-gradient(90deg, #c5dcfb, #93b8f0);
}

.icons {
  flex: 1;
  display: grid;
  grid-template-columns: repeat(8, 16px);
  grid-auto-rows: 16px;
  padding-left: 1px;
  margin-right: 3px;
  border-bottom: 1px solid #c8c8c8;
}

.group:last-child .icons {
  border-bottom: none;
}

.tall {
  height: 33px;
}

.icons svg {
  width: 16px;
  height: 16px;
}

.icons text {
  font-family: "Liberation Serif", serif;
  font-size: 6px;
  font-weight: 700;
  fill: #98252d;
}

.icons .big {
  font-size: 13px;
}

.icons .blue {
  fill: #3a6fc0;
}

.icons .q {
  font-size: 9px;
  fill: #9a1fa8;
}

.bl {
  stroke: #5b8dd0;
}

.dk {
  stroke: #6d7a88;
}

.bk {
  stroke: #222;
}

.rd {
  stroke: #a8434a;
}

.hatch {
  fill: #8fbde6;
  stroke: #5f7f9c;
}

.dots {
  fill: #bbb;
  stroke: #999;
}

.dash {
  stroke-dasharray: 2 1;
}

.ruler {
  fill: #ecd868;
  stroke: #b5a548;
  stroke-dasharray: 1 1;
}

.bars {
  display: flex;
  flex-direction: column;
  gap: 3px;
}

.bars button {
  flex: none;
  display: flex;
  align-items: center;
  gap: 4px;
  height: 13px;
  padding: 0 5px 0 2px;
  border: 1px solid #bdbdbd;
  border-radius: 2px;
  background: linear-gradient(#f3f3f3, #d4d4d4);
  color: #444;
  text-align: left;
}

.bars svg {
  width: 9px;
  height: 9px;
}

.bars span {
  flex: 1;
}

.bars i {
  border: 3px solid transparent;
  border-top: 4px solid #222;
  border-bottom: 0;
}

/* view window */
.view {
  flex: 1;
  min-width: 0;
  display: flex;
  flex-direction: column;
  margin-left: 4px;
  padding-left: 3px;
  background-color: #b5cdea;
  border-top: 2px solid #dfe6ee;
}

.view-title {
  display: flex;
  align-items: center;
  gap: 4px;
  height: 15px;
  margin-left: -3px;
  padding-left: 5px;
  background: linear-gradient(#98b4d4, #b9d0ea);
  color: #223;
}

.view-title svg {
  width: 8px;
  height: 8px;
}

.view-tools {
  display: flex;
  align-items: center;
  height: 14px;
  padding-left: 1px;
  background-color: #f0f0f0;
}

.view-tools button {
  display: flex;
  align-items: center;
  justify-content: center;
  width: 13px;
  height: 13px;
}

.view-tools .split {
  width: 21px;
  justify-content: flex-start;
  gap: 3px;
}

.view-tools svg {
  width: 10px;
  height: 10px;
}

.view-tools .on {
  background-color: #fcd58a;
  border: 1px solid #c9923a;
}

.canvas {
  position: relative;
  flex: 1;
  background-color: black;
}

.drawing {
  position: absolute;
  left: 320px;
  bottom: -10px;
  width: 120px;
  overflow: visible;
}

.geo {
  position: absolute;
  left: 79px;
  top: 265px;
  width: 100px;
  height: 35px;
  padding: 7px 3px 0;
  background-color: #f0f0f0;
}

.geo p {
  padding-left: 4px;
  color: #999;
}

.geo div {
  display: flex;
  gap: 3px;
  padding-top: 2px;
}

.geo svg {
  width: 13px;
  height: 13px;
}

/* dialogs */
.dialog {
  position: absolute;
  background-color: #f0f0f0;
  border: 1px solid #aaa;
  box-shadow: 0 0 2px rgba(0, 0, 0, 0.5);
}

.dialog > h2 {
  padding-left: 2px;
  line-height: 14px;
  background-color: white;
}

.dialog h3, .category, .dialog label, .dialog nav, .btn {
  font-size: 6px;
}

.btn {
  display: block;
  width: 36px;
  height: 13px;
  line-height: 11px;
  text-align: center;
  background-color: #e1e1e1;
  border: 1px solid #b8b8b8;
}

.btn:disabled {
  background-color: #c9c9c9;
  border-color: #c0c0c0;
  color: #888;
}

.picked {
  background-color: #d6eefb;
}

.scroll {
  display: flex;
  flex-direction: column;
  align-items: center;
  width: 8px;
  padding: 3px 0;
  gap: 3px;
  background-color: #f0f0f0;
}

.scroll span {
  width: 8px;
  background-color: #c9c9c9;
}

.scroll i {
  flex: none;
  width: 4px;
  height: 4px;
  border: solid #333;
  border-width: 1px 0 0 1px;
}

.scroll .up {
  transform: translateY(1px) rotate(45deg);
}

.scroll .down {
  margin-top: auto;
  transform: translateY(-1px) rotate(225deg);
}

.scroll .left {
  transform: rotate(-45deg);
}

.scroll .right {
  margin-left: auto;
  transform: rotate(135deg);
}

.config {
  left: 66px;
  top: 0;
  width: 330px;
  height: 274px;
  border-top: 0;
}

.config > h2 {
  color: #999;
}

.config nav {
  height: 11px;
  padding-left: 6px;
  border-bottom: 1px solid #bbb;
}

.config-body {
  display: flex;
  padding: 2px 7px 2px 1px;
}

.category {
  position: relative;
  display: grid;
  grid-template-columns: 1fr 8px;
  grid-template-rows: 11px 232px;
  width: 95px;
  border: 1px solid #c0c0c0;
  background-color: white;
}

.category::after {
  content: "";
  position: absolute;
  left: -13px;
  top: -2px;
  width: 85px;
  height: 25px;
  border: 3px solid #e60f14;
}

.category h3 {
  padding-left: 2px;
  line-height: 12px;
  background-color: #f5f5f5;
}

.category ul {
  grid-row: 2;
  display: flex;
  flex-direction: column;
  min-height: 0;
  list-style: none;
}

.category li {
  flex: 1;
  min-height: 0;
  padding-left: 1px;
  line-height: 8px;
}

.category .scroll {
  grid-column: 2;
  grid-row: 1 / 3;
}

.category .scroll span {
  height: 162px;
}

.variables {
  width: 178px;
  margin-left: 3px;
  padding-left: 5px;
  border-left: 1px solid #c0c0c0;
}

.variables h3 {
  padding-left: 1px;
}

.list {
  display: flex;
  height: 57px;
  padding: 1px 2px 1px 1px;
  border: 1px solid #999;
  background-color: white;
}

.list table {
  flex: 1;
  border-collapse: collapse;
  table-layout: fixed;
}

.list td {
  height: 9px;
  white-space: nowrap;
}

.list td:first-child {
  width: 117px;
}

.list td:nth-child(2) {
  width: 37px;
}

.list .scroll span {
  height: 9px;
}

.actions {
  display: flex;
  gap: 9px;
  padding: 10px 0 5px 8px;
}

.expansion-box {
  height: 60px;
  border: 1px solid #bbb;
}

.side {
  display: flex;
  flex-direction: column;
  gap: 6px;
  padding: 10px 0 0 6px;
}

.side .marked {
  margin-top: 27px;
  outline: 3px solid #e60f14;
  outline-offset: 3px;
}

.new-variable {
  left: 155px;
  top: 131px;
  width: 302px;
  height: 187px;
}

.new-variable > h2 {
  color: #222;
}

.form-body {
  display: flex;
  gap: 7px;
  padding: 3px 11px 0 7px;
}

.fields {
  position: relative;
  flex: 1;
  min-width: 0;
  display: grid;
  grid-template-columns: 34px minmax(0, 1fr);
  grid-template-rows: 11px 61px 63px;
  column-gap: 3px;
  row-gap: 10px;
}

.fields label {
  text-align: right;
  white-space: nowrap;
}

.fields::before {
  content: "";
  position: absolute;
  left: 6px;
  top: -3px;
  width: 214px;
  height: 16px;
  border: 3px solid #e60f14;
}

.fields input {
  padding-left: 3px;
  border: 1px solid #bbb;
  background-color: #f8f8f8;
}

.fields textarea {
  margin-right: 5px;
  padding-left: 1px;
  border: 1px solid #999;
  background-color: white;
  font-family: "Liberation Mono", monospace;
  white-space: pre;
  overflow: hidden;
  resize: none;
  color: #555;
}

.expanded {
  display: flex;
  flex-direction: column;
  justify-content: space-between;
  margin-right: 5px;
  padding: 1px;
  border: 1px solid #999;
  background-color: white;
}

.expanded output {
  background-color: #d6eefb;
  font-size: 6px;
  white-space: nowrap;
}

.flat {
  flex-direction: row;
  width: auto;
  height: 8px;
  padding: 0 3px;
}

.flat span {
  width: 120px;
  height: 8px;
}

.confirm {
  display: flex;
  flex-direction: column;
  gap: 5px;
  padding-top: 9px;
}

.ok {
  border-color: #0078d7;
}
```
